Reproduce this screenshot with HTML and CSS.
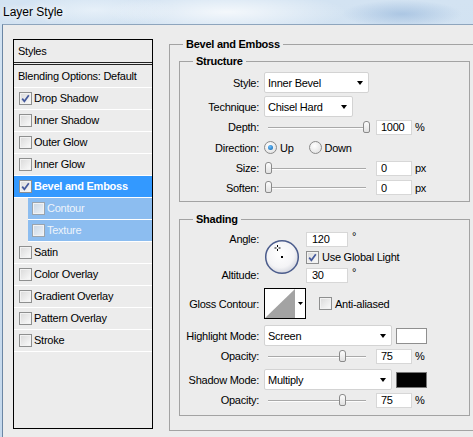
FILE: index.html
```html
<!DOCTYPE html>
<html lang="en">
<head>
    <meta charset="UTF-8">
    <meta name="viewport" content="width=device-width, initial-scale=1.0">
    <link rel="stylesheet" href="styles.css">
    <title>Layer Style</title>
</head>
<body>
    <div class="window">
        <div class="titlebar"><span class="title">Layer Style</span></div>
        <div class="client">

            <!-- effects list -->
            <div class="styles-list">
                <div class="item head">Styles</div>
                <div class="item blend">Blending Options: Default</div>
                <div class="item"><span class="check on"><svg viewBox="0 0 11 11"><path d="M2.2 5.6 L4.4 8.3 L8.8 2.2"/></svg></span>Drop Shadow</div>
                <div class="item"><span class="check"></span>Inner Shadow</div>
                <div class="item"><span class="check"></span>Outer Glow</div>
                <div class="item"><span class="check"></span>Inner Glow</div>
                <div class="item selected"><span class="check on"><svg viewBox="0 0 11 11"><path d="M2.2 5.6 L4.4 8.3 L8.8 2.2"/></svg></span>Bevel and Emboss</div>
                <div class="item sub"><span class="check"></span>Contour</div>
                <div class="item sub"><span class="check"></span>Texture</div>
                <div class="item"><span class="check"></span>Satin</div>
                <div class="item"><span class="check"></span>Color Overlay</div>
                <div class="item"><span class="check"></span>Gradient Overlay</div>
                <div class="item"><span class="check"></span>Pattern Overlay</div>
                <div class="item"><span class="check"></span>Stroke</div>
            </div>

            <div class="panel">
                <fieldset class="group outer">
                    <legend>Bevel and Emboss</legend>

                    <fieldset class="group structure">
                        <legend>Structure</legend>
                        <div class="row h21 gap3">
                            <label class="lbl">Style:</label>
                            <div class="select w105">Inner Bevel<i class="arrow"></i></div>
                        </div>
                        <div class="row h21">
                            <label class="lbl">Technique:</label>
                            <div class="select w88">Chisel Hard<i class="arrow"></i></div>
                        </div>
                        <div class="row h20">
                            <label class="lbl">Depth:</label>
                            <div class="slider"><div class="track"><span class="thumb" style="left: 100%"></span></div></div>
                            <input type="text" class="num" value="1000">
                            <span class="unit">%</span>
                        </div>
                        <div class="row h21">
                            <label class="lbl">Direction:</label>
                            <span class="radio on"></span><span class="opt">Up</span>
                            <span class="radio"></span><span class="opt">Down</span>
                        </div>
                        <div class="row h20">
                            <label class="lbl">Size:</label>
                            <div class="slider"><div class="track"><span class="thumb" style="left: 0%"></span></div></div>
                            <input type="text" class="num" value="0">
                            <span class="unit">px</span>
                        </div>
                        <div class="row h19">
                            <label class="lbl">Soften:</label>
                            <div class="slider"><div class="track"><span class="thumb" style="left: 0%"></span></div></div>
                            <input type="text" class="num" value="0">
                            <span class="unit">px</span>
                        </div>
                    </fieldset>

                    <fieldset class="group shading">
                        <legend>Shading</legend>
                        <div class="angle-block">
                            <label class="lbl a-lbl">Angle:</label>
                            <svg class="dial" width="36" height="36" viewBox="0 0 36 36">
                                <defs>
                                    <radialGradient id="dialFill" cx="45%" cy="40%" r="60%">
                                        <stop offset="0" stop-color="#ffffff"/>
                                        <stop offset="0.7" stop-color="#f4f4f6"/>
                                        <stop offset="1" stop-color="#d6d8e0"/>
                                    </radialGradient>
                                </defs>
                                <circle cx="18" cy="18" r="16.3" fill="url(#dialFill)" stroke="#4b5c8c" stroke-width="1.5"/>
                                <path d="M13.5 6 V8 M13.5 10 V12 M10.5 9 H12.5 M14.5 9 H16.5" stroke="#000" stroke-width="1"/>
                                <rect x="17" y="17" width="2" height="2" fill="#000"/>
                            </svg>
                            <div class="a-val a1"><input type="text" class="num wide" value="120"><span class="deg">°</span></div>
                            <div class="a-val a2"><span class="check on"><svg viewBox="0 0 11 11"><path d="M2.2 5.6 L4.4 8.3 L8.8 2.2"/></svg></span>Use Global Light</div>
                            <label class="lbl a-lbl3">Altitude:</label>
                            <div class="a-val a3"><input type="text" class="num wide" value="30"><span class="deg">°</span></div>
                        </div>

                        <div class="row h30 top5">
                            <label class="lbl">Gloss Contour:</label>
                            <svg class="contour" width="42" height="31" viewBox="0 0 42 31">
                                <rect x="0.5" y="0.5" width="41" height="30" fill="#fff" stroke="#000"/>
                                <polygon points="1,30 31,1 31,30" fill="#a3a3a3"/>
                                <polygon points="34,14 39,14 36.5,17" fill="#000"/>
                            </svg>
                            <span class="check aa"></span>Anti-aliased
                        </div>

                        <div class="row h21 top6">
                            <label class="lbl">Highlight Mode:</label>
                            <div class="select w128">Screen<i class="arrow"></i></div>
                            <span class="swatch white"></span>
                        </div>
                        <div class="row h20">
                            <label class="lbl">Opacity:</label>
                            <div class="slider"><div class="track"><span class="thumb" style="left: 75%"></span></div></div>
                            <input type="text" class="num" value="75">
                            <span class="unit">%</span>
                        </div>
                        <div class="row h21 top3">
                            <label class="lbl">Shadow Mode:</label>
                            <div class="select w128">Multiply<i class="arrow"></i></div>
                            <span class="swatch black"></span>
                        </div>
                        <div class="row h20">
                            <label class="lbl">Opacity:</label>
                            <div class="slider"><div class="track"><span class="thumb" style="left: 75%"></span></div></div>
                            <input type="text" class="num" value="75">
                            <span class="unit">%</span>
                        </div>
                    </fieldset>
                </fieldset>
            </div>
        </div>
    </div>
</body>
</html>
```

FILE: styles.css
```css
html, body{
    margin: 0;
    padding: 0;
    overflow: hidden;
}
body{
    font-family: "Liberation Sans", Arial, sans-serif;
    font-size: 11px;
    letter-spacing: -0.25px;
    color: #000;
    background: #c9dcee;
}
.window{
    width: 473px;
    height: 437px;
    display: flex;
    flex-direction: column;
    background:
        radial-gradient(ellipse 120px 20px at 48% 12px, rgba(255,255,255,0.75), rgba(255,255,255,0) 100%),
        radial-gradient(ellipse 60px 14px at 85% 14px, rgba(140,175,215,0.55), rgba(140,175,215,0) 100%),
        radial-gradient(ellipse 80px 16px at 20% 10px, rgba(235,243,250,0.8), rgba(235,243,250,0) 100%),
        linear-gradient(#d3e3f2, #c4d8ec);
}
.titlebar{
    height: 24px;
    flex: none;
    display: flex;
    align-items: center;
    padding-left: 3px;
}
.title{
    font-size: 12px;
    letter-spacing: 0;
    text-shadow: 0 0 6px #fff, 0 0 10px #fff;
}
.client{
    flex: 1;
    margin-left: 2px;
    border-left: 1px solid #6b86a4;
    border-top: 1px solid #8ea5bd;
    background: #ececec;
    display: flex;
    align-items: flex-start;
    padding: 14px 0 0 10px;
    overflow: hidden;
}

/* left list of effects */
.styles-list{
    width: 138px;
    height: 388px;
    border: 1px solid #000;
    flex: none;
}
.item{
    height: 20px;
    padding-bottom: 1px;
    border-bottom: 1px solid #fff;
    display: flex;
    align-items: center;
    padding-left: 5px;
    white-space: nowrap;
}
.item.head{
    height: 21px;
    border-bottom: 3px double #222;
    padding-left: 4px;
}
.item.blend{
    height: 21px;
    padding-left: 4px;
}
.item.selected{
    background: #3399ff;
    color: #fff;
    font-weight: bold;
}
.item.sub{
    margin-left: 14px;
    padding-left: 4px;
    background: #8cbdf0;
    color: #eef4fb;
}
.item .check{
    margin-right: 2px;
}

.check{
    width: 13px;
    height: 13px;
    box-sizing: border-box;
    border: 1px solid #8e8f8f;
    background: linear-gradient(135deg, #d9d9d9, #fbfbfb);
    box-shadow: inset 0 0 0 1px #f2f2f2;
    flex: none;
    display: flex;
    align-items: center;
    justify-content: center;
}
.item.sub .check{
    border-color: #9aa4ae;
    background: linear-gradient(135deg, #c9d6e4, #eef3f8);
}
.check svg{
    width: 11px;
    height: 11px;
}
.check path{
    fill: none;
    stroke: #44599c;
    stroke-width: 1.7;
}

/* right side */
.panel{
    margin-left: 16px;
    flex: none;
}
.group{
    margin: 0;
    padding: 0;
    border: 1px solid #a3a3a3;
    min-inline-size: 0;
}
.group legend{
    font-weight: bold;
    line-height: 11px;
    padding: 0 3px;
}
.outer{
    width: 291px;
    padding: 6px 10px 14px 9px;
}
.outer > legend{
    margin-left: 4px;
}
.structure{
    padding: 5px 0 4px 0;
}
.structure > legend, .shading > legend{
    margin-left: 13px;
}
.shading{
    margin-top: 12px;
    padding: 6px 0 5px 0;
}

.row{
    display: flex;
    align-items: center;
    white-space: nowrap;
}
.h19{ height: 19px; }
.h20{ height: 20px; }
.h21{ height: 21px; }
.h30{ height: 31px; }
.gap3{ margin-bottom: 3px; }
.top3{ margin-top: 3px; }
.top5{ margin-top: 5px; }
.top6{ margin-top: 6px; }

.lbl{
    width: 79px;
    text-align: right;
    margin-right: 5px;
    flex: none;
}

.select{
    height: 21px;
    box-sizing: border-box;
    border: 1px solid #d3d3d3;
    border-radius: 2px;
    background: #fff;
    display: flex;
    align-items: center;
    justify-content: space-between;
    padding: 0 5px 0 3px;
    flex: none;
}
.w105{ width: 105px; }
.w88{ width: 89px; }
.w128{ width: 128px; }
.arrow{
    width: 0;
    height: 0;
    border-left: 3.5px solid transparent;
    border-right: 3.5px solid transparent;
    border-top: 4px solid #000;
}

.slider{
    width: 108px;
    height: 13px;
    flex: none;
    position: relative;
}
.track{
    position: absolute;
    left: 4px;
    right: 6px;
    top: 6px;
    height: 1px;
    background: #a9a9a9;
    border-bottom: 1px solid #fdfdfd;
}
.thumb{
    position: absolute;
    top: -6px;
    width: 7px;
    height: 12px;
    margin-left: -3px;
    box-sizing: border-box;
    border: 1px solid #8a8a8a;
    border-radius: 3px 3px 2px 2px;
    background: linear-gradient(#fdfdfd, #e1e1e1);
}

.num{
    width: 36px;
    height: 15px;
    box-sizing: border-box;
    margin: 0 0 0 4px;
    padding: 0 0 0 4px;
    border: 1px solid #d7d7d7;
    background: #fff;
    font-family: inherit;
    font-size: 11px;
    letter-spacing: -0.25px;
    line-height: 13px;
    color: #000;
    outline: none;
}
.num.wide{
    width: 42px;
    margin-left: 0;
    padding-left: 5px;
}
.unit{
    margin-left: 3px;
}
.deg{
    margin-left: 4px;
    align-self: flex-start;
    line-height: 10px;
}

.radio{
    width: 13px;
    height: 13px;
    box-sizing: border-box;
    border: 1px solid #8a8a8a;
    border-radius: 50%;
    background: radial-gradient(circle at 40% 35%, #fff, #dcdcdc);
    flex: none;
    display: flex;
    align-items: center;
    justify-content: center;
    margin-right: 3px;
}
.radio.on::after{
    content: "";
    width: 5px;
    height: 5px;
    border-radius: 50%;
    background: radial-gradient(circle at 40% 35%, #6cc0ff, #0a5fa8);
}
.opt{
    margin-right: 15px;
}

.angle-block{
    display: grid;
    grid-template-columns: 79px 37px auto;
    grid-template-rows: 16px 20px 16px;
    column-gap: 5px;
}
.a-lbl{
    grid-column: 1;
    grid-row: 1;
    align-self: center;
    margin: 0;
}
.a-lbl3{
    grid-column: 1;
    grid-row: 3;
    align-self: center;
    margin: 0;
}
.dial{
    grid-column: 2;
    grid-row: 1 / 4;
    align-self: center;
}
.a-val{
    grid-column: 3;
    display: flex;
    align-items: center;
}
.a1{ grid-row: 1; }
.a2{ grid-row: 2; }
.a3{ grid-row: 3; }
.a2 .check{
    margin-right: 3px;
}

.contour{
    flex: none;
}
.check.aa{
    margin: 0 3px 0 13px;
}

.swatch{
    width: 31px;
    height: 16px;
    box-sizing: border-box;
    margin-left: 4px;
    flex: none;
}
.swatch.white{
    background: #fff;
    border: 1px solid #8f8f8f;
}
.swatch.black{
    background: #000;
    border: 1px solid #777;
}
```
